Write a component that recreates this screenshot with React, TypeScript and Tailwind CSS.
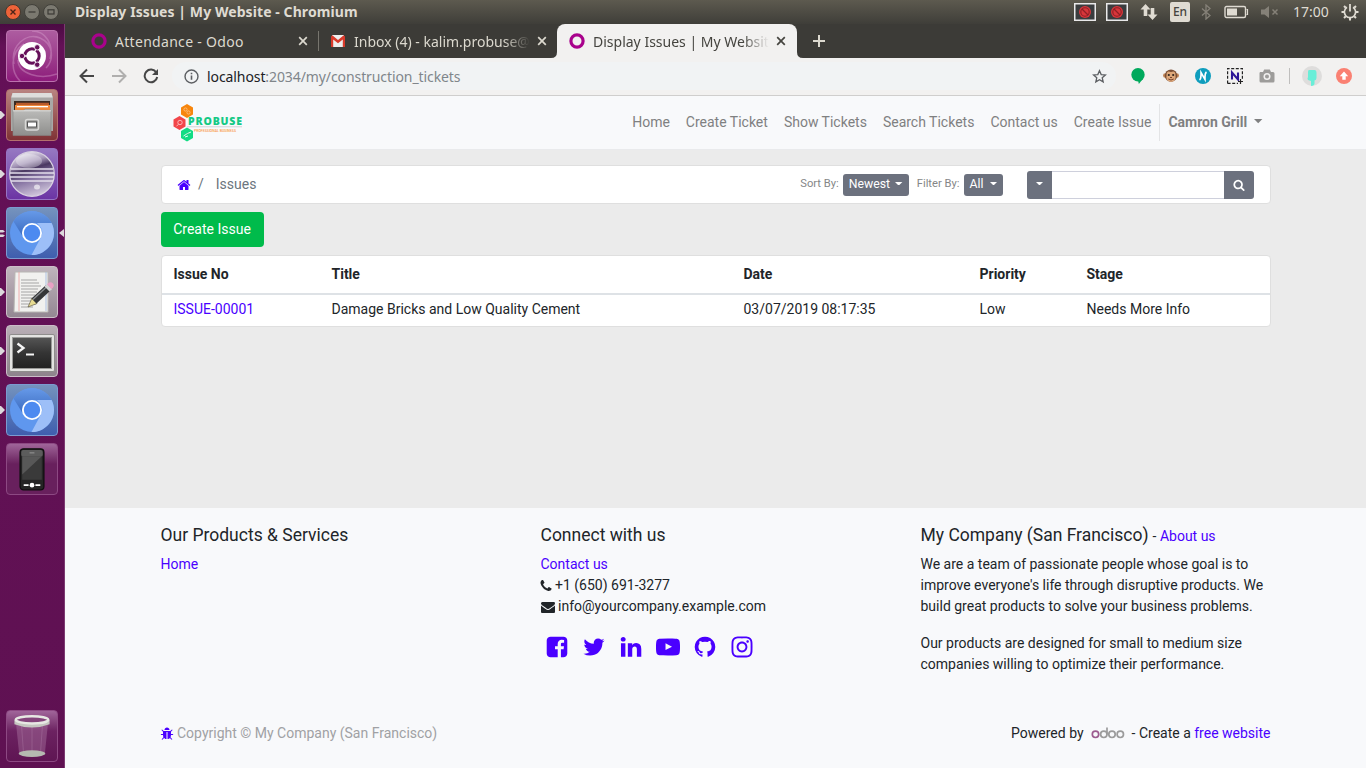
import React from "react";
import { FaInstagram } from "react-icons/fa";

const P = {
  home: "M1472 992v480q0 26-19 45t-45 19h-384v-384h-256v384h-384q-26 0-45-19t-19-45v-480q0-1 .5-3t.5-3l575-474 575 474q1 2 1 6zm223-69l-62 74q-8 9-21 11h-3q-13 0-21-7l-692-577-692 577q-12 8-24 7-13-2-21-11l-62-74q-8-10-7-23.5t11-21.5l719-599q32-26 76-26t76 26l244 204v-195q0-14 9-23t23-9h192q14 0 23 9t9 23v408l219 182q10 8 11 21.5t-7 23.5z",
  search: "M1216 832q0-185-131.5-316.5t-316.5-131.5-316.5 131.5-131.5 316.5 131.5 316.5 316.5 131.5 316.5-131.5 131.5-316.5zm512 832q0 52-38 90t-90 38q-54 0-90-38l-343-342q-179 124-399 124-143 0-273.5-55.5t-225-150-150-225-55.5-273.5 55.5-273.5 150-225 225-150 273.5-55.5 273.5 55.5 225 150 150 225 55.5 273.5q0 220-124 399l343 343q37 37 37 90z",
  phone: "M1600 1240q0 27-10 70.5t-21 68.5q-21 50-122 106-94 51-186 51-27 0-53-3.5t-57.5-12.5-47-14.5-55.5-20.5-49-18q-98-35-175-83-127-79-264-216t-216-264q-48-77-83-175-3-9-18-49t-20.5-55.5-14.5-47-12.5-57.5-3.5-53q0-92 51-186 56-101 106-122 25-11 68.5-21t70.5-10q14 0 21 3 18 6 53 76 11 19 30 54t35 63.5 31 53.5q3 4 17.5 25t21.5 35.5 7 28.5q0 20-28.5 50t-62 55-62 53-28.5 46q0 9 5 22.5t8.5 20.5 14 24 11.5 19q76 137 174 235t235 174q2 1 19 11.5t24 14 20.5 8.5 22.5 5q18 0 46-28.5t53-62 55-62 50-28.5q14 0 28.5 7t35.5 21.5 25 17.5q25 15 53.5 31t63.5 35 54 30q70 35 76 53 3 7 3 21z",
  mail: "M1792 710v794q0 66-47 113t-113 47h-1472q-66 0-113-47t-47-113v-794q44 49 101 87 362 246 497 345 57 42 92.5 65.5t94.5 48 110 24.5h2q51 0 110-24.5t94.5-48 92.5-65.5q170-123 498-345 57-39 100-87zm0-294q0 79-49 151t-122 123q-376 261-468 325-10 7-42.5 31t-54 38.5-52 32.5-57.5 27-50 9h-2q-23 0-50-9t-57.5-27-52-32.5-54-38.5-42.5-31q-91-64-262-182.5t-205-142.5q-62-42-117-115.5t-55-136.5q0-78 41.5-130t118.5-52h1472q65 0 112.5 47t47.5 113z",
  bug: "M1696 960q0 26-19 45t-45 19h-224q0 171-67 290l208 209q19 19 19 45t-19 45q-18 19-45 19t-45-19l-198-197q-5 5-15 13t-42 28.5-65 36.5-82 29-97 13v-896h-128v896q-51 0-101.5-13.5t-87-33-66-39-43.5-32.5l-15-14-183 207q-20 21-48 21-24 0-43-16-19-18-20.5-44.5t15.5-46.5l202-227q-58-114-58-274h-224q-26 0-45-19t-19-45 19-45 45-19h224v-294l-173-173q-19-19-19-45t19-45 45-19 45 19l173 173h844l173-173q19-19 45-19t45 19 19 45-19 45l-173 173v294h224q26 0 45 19t19 45zm-480-576h-640q0-133 93.5-226.5t226.5-93.5 226.5 93.5 93.5 226.5z",
  twitter: "M1684 408q-67 98-162 167 1 14 1 42 0 130-38 259.5t-115.5 248.5-184.5 210.5-258 146-323 54.5q-271 0-496-145 35 4 78 4 225 0 401-138-105-2-188-64.5t-114-159.5q33 5 61 5 43 0 85-11-112-23-185.5-111.5t-73.5-205.5v-4q68 38 146 41-66-44-105-115t-39-154q0-88 44-163 121 149 294.5 238.5t371.5 99.5q-8-38-8-74 0-134 94.5-228.5t228.5-94.5q140 0 236 102 109-21 205-78-37 115-142 178 93-10 186-50z",
  linkedin: "M477 625v991h-330v-991h330zm21-306q1 73-50.5 122t-135.5 49h-2q-82 0-132-49t-50-122q0-74 51.5-122.5t134.5-48.5 133 48.5 51 122.5zm1166 729v568h-329v-530q0-105-40.5-164.5t-126.5-59.5q-63 0-105.5 34.5t-63.5 85.5q-11 30-11 81v553h-329q2-399 2-647t-1-296l-1-48h329v144h-2q20-32 41-56t56.5-52 87-43.5 114.5-15.5q171 0 275 113.5t104 332.5z",
  github: "M896 128q209 0 385.5 103t279.5 279.5 103 385.5q0 251-146.5 451.5t-378.5 277.5q-27 5-40-7t-13-30q0-3 .5-76.5t.5-134.5q0-97-52-142 57-6 102.5-18t94-39 81-66.5 53-105 20.5-150.5q0-119-79-206 37-91-8-204-28-9-81 11t-92 44l-38 24q-93-26-192-26t-192 26q-16-11-42.5-27t-83.5-38.5-85-13.5q-45 113-8 204-79 87-79 206 0 85 20.5 150t52.5 105 80.5 67 94 39 102.5 18q-39 36-49 103-21 10-45 15t-57 5-65.5-21.5-55.5-62.5q-19-32-48.5-52t-49.5-24l-20-3q-21 0-29 4.5t-5 11.5 9 14 13 12l7 5q22 10 43.5 38t31.5 51l10 23q13 38 44 61.5t67 30 69.5 7 55.5-3.5l23-4q0 38 .5 88.5t.5 54.5q0 18-13 30t-40 7q-232-77-378.5-277.5t-146.5-451.5q0-209 103-385.5t279.5-279.5 385.5-103z",
  facebook: "M1376 128q119 0 203.5 84.5t84.5 203.5v960q0 119-84.5 203.5t-203.5 84.5h-188v-595h199l30-232h-229v-148q0-56 23.5-84t91.5-28l122-1v-207q-63-9-178-9-136 0-217.5 80t-81.5 226v171h-200v232h200v595h-532q-119 0-203.5-84.5t-84.5-203.5v-960q0-119 84.5-203.5t203.5-84.5h960z",
  youtube: "M711 1128l484-250-484-253v503zm185-862q168 0 324.5 4.5t229.5 9.5l73 4q1 0 17 1.5t23 3 23.5 4.5 28.5 8 28 13 31 19.5 29 26.5q6 6 15.5 18.5t29 58.5 26.5 101q8 64 12.5 136.5t5.5 113.5v176q1 145-18 290-7 55-25 99.5t-32 61.5l-14 17q-14 15-29 26.5t-31 19-28 12.5-28.5 8-24 4.5-23 3-16.5 1.5q-251 19-627 19-207-2-359.5-6.5t-200.5-7.5l-49-4-36-4q-36-5-54.5-10t-51-21-56.5-41q-6-6-15.5-18.5t-29-58.5-26.5-101q-8-64-12.5-136.5t-5.5-113.5v-176q-1-145 18-290 7-55 25-99.5t32-61.5l14-17q14-15 29-26.5t31-19.5 28-13 28.5-8 23.5-4.5 23-3 17-1.5q251-18 627-18z",
};

function Icon({ d, className }: { d: string; className: string }) {
  return (
    <svg viewBox="0 0 1792 1792" fill="currentColor" className={`shrink-0 ${className}`}>
      <path d={d} />
    </svg>
  );
}

const Caret = ({ className = "h-1 w-2" }: { className?: string }) => (
  <svg viewBox="0 0 8 4" className={`shrink-0 ${className}`} fill="currentColor"><path d="M0 0h8L4 4z" /></svg>
);

/* ---------- desktop panel ---------- */

function BlockedIndicator() {
  return (
    <svg viewBox="0 0 22 18" className="h-[18px] w-[22px] shrink-0">
      <rect x=".75" y=".75" width="20.5" height="16.5" fill="#3a3d3f" stroke="#e9e9ea" strokeWidth="1.5" />
      <circle cx="11" cy="9" r="6" fill="#d8363b" />
      <circle cx="11" cy="9" r="4.2" fill="none" stroke="#8d1f24" strokeWidth="1.1" />
      <path d="M8 6l6 6" stroke="#8d1f24" strokeWidth="1.2" />
    </svg>
  );
}

function DesktopPanel() {
  return (
    <header className="flex h-6 shrink-0 items-center bg-linear-to-b from-[#5d5a4f] to-[#3f3e39] text-[#dfdbd2]">
      <div className="flex w-[75px] shrink-0 gap-[3px] pl-[5px]">
        <svg viewBox="0 0 16 16" className="size-4"><circle cx="8" cy="8" r="7.5" fill="#ee6339" stroke="#43392f" /><path d="M5.5 5.5l5 5m0-5l-5 5" stroke="#4b2418" strokeWidth="1.4" /></svg>
        <svg viewBox="0 0 16 16" className="size-4"><circle cx="8" cy="8" r="7.5" fill="#7b7970" stroke="#42413b" /><path d="M4.5 8h7" stroke="#3b3a35" strokeWidth="1.2" /></svg>
        <svg viewBox="0 0 16 16" className="size-4"><circle cx="8" cy="8" r="7.5" fill="#7b7970" stroke="#42413b" /><rect x="5" y="5.8" width="6" height="4.2" fill="none" stroke="#3b3a35" strokeWidth="1.2" /></svg>
      </div>
      <h1 className="w-[288px] text-[14px] leading-6 font-bold tracking-[0.08px] whitespace-nowrap">Display Issues | My Website - Chromium</h1>
      <div className="ml-auto flex items-center pr-[7px]">
        <BlockedIndicator />
        <div className="w-2.5" />
        <BlockedIndicator />
        <svg viewBox="0 0 18 18" className="ml-3 h-[18px] w-[18px]" fill="#dfdbd2"><path d="M5.500 1L0.500 6.500h3.200V13h3.600V6.500h3.200zM12.500 17l5-5.500h-3.200V5h-3.600v6.500H7.500z" /></svg>
        <span className="ml-3 flex h-5 w-5 items-center justify-center rounded-[2px] bg-[#dfdbd2] text-[12px] font-medium text-[#45443e]">En</span>
        <svg viewBox="0 0 10 16" className="ml-[11px] h-4 w-2.5" fill="none" stroke="#858178" strokeWidth="1.3"><path d="M1 4.5l8 7L5 15V1l4 3.5-8 7" /></svg>
        <svg viewBox="0 0 25 14" className="ml-[13px] h-3.5 w-[25px]"><rect x="1" y="1.5" width="20.5" height="11" rx="1.5" fill="none" stroke="#dfdbd2" strokeWidth="1.4" /><rect x="3" y="3.5" width="10" height="7" fill="#dfdbd2" /><path d="M22.5 4.5h1v5h-1" stroke="#dfdbd2" fill="none" strokeWidth="1.2" /></svg>
        <svg viewBox="0 0 18 14" className="ml-3 h-3.5 w-[18px]" fill="#858178"><path d="M0 4.5h3.5L8 1v12L3.5 9.500H0z" /><path d="M11.5 4.500l5 5m0-5l-5 5" stroke="#858178" strokeWidth="1.5" /></svg>
        <span className="ml-3.5 w-[37px] text-[14px] leading-6 whitespace-nowrap">17:00</span>
        <svg viewBox="0 0 18 18" className="ml-[11px] size-[18px]" fill="none" stroke="#dfdbd2">
          <path d="M6 4.300a5.600 5.600 0 1 0 6 0" strokeWidth="1.600" />
          <path d="M9 1v7.500" strokeWidth="1.800" />
          <path d="M.5 9h2.500M15 9h2.500M3 15l1.800-1.800M15 15l-1.800-1.800M9 17.500v-2.500M3 3l1.800 1.800M15 3l-1.800 1.800" strokeWidth="2" />
        </svg>
      </div>
    </header>
  );
}

/* ---------- launcher ---------- */

const Gloss = "relative flex size-[52px] shrink-0 items-center justify-center rounded-[4px] border ";

function Running({ double = false }: { double?: boolean }) {
  return double ? (
    <svg viewBox="0 0 5 9" className="absolute top-[21px] -left-[7px] h-[9px] w-[5px]" fill="#dcd9dc"><path d="M0 1h3l2 1.500-2 1H0zM0 5.500h3l2 1-2 1.500H0z" /></svg>
  ) : (
    <svg viewBox="0 0 5 8" className="absolute top-[21px] -left-[7px] h-2 w-[5px]" fill="#dcd9dc"><path d="M0 0h1l4 4-4 4H0z" /></svg>
  );
}

function ChromiumGlyph({ id }: { id: string }) {
  return (
    <svg viewBox="0 0 44 44" className="size-[44px]">
      <defs>
        <linearGradient id={id} x1="0" y1="0" x2="0" y2="1"><stop offset="0" stopColor="#6699e8" /><stop offset="1" stopColor="#3b6bc0" /></linearGradient>
      </defs>
      <circle cx="22" cy="22" r="22" fill="#5f97ee" />
      <path d="M3.500 10.500A22 22 0 0 1 41.500 12H22a10 10 0 0 0-9.500 13z" fill={`url(#${id})`} />
      <path d="M41.600 12A22 22 0 0 1 21.500 44l9.300-17.200a10 10 0 0 0-1.500-12.300L27 12z" fill="#9dbff8" />
      <circle cx="22" cy="22" r="10" fill="#fff" />
      <circle cx="22" cy="22" r="8.200" fill="#4d8af0" />
    </svg>
  );
}

function Launcher() {
  return (
    <aside className="flex w-[65px] shrink-0 flex-col gap-[7px] border-r border-[#7c3a71] bg-linear-to-b from-[#4b0b43] via-[#641057] via-3% to-[#5f1152] pt-1.5 pb-1.5 pl-1.5">
      <div className={Gloss + "overflow-hidden border-[#bb72ae] bg-linear-to-b from-[#ad5ca0] to-[#8d1a7b]"}>
        <svg viewBox="0 0 52 52" className="size-[52px] shrink-0">
          <g fill="none" stroke="#d9a3d0" strokeOpacity=".4" strokeWidth="1.500">
            <path d="M8 34C4 16 20 2 34 8s14 22 6 30M15 52C4 42 4 22 18 14M51 44C34 50 12 44 12 30M26 1c14 0 22 14 18 28" />
          </g>
          <circle cx="26" cy="26" r="14" fill="#fff" />
          <circle cx="26" cy="26" r="7.200" fill="none" stroke="#66105a" strokeWidth="3" />
          <path d="M26 26L13 26M26 26l7-12M26 26l7 12" stroke="#fff" strokeWidth="1.300" />
          <g fill="#66105a" stroke="#fff" strokeWidth=".8"><circle cx="16" cy="26" r="2.700" /><circle cx="31.200" cy="17.300" r="2.700" /><circle cx="31.200" cy="34.700" r="2.700" /></g>
        </svg>
      </div>

      <div className={Gloss + "border-[#b3706d] bg-linear-to-b from-[#b98481] to-[#7f3235]"}>
        <Running />
        <svg viewBox="0 0 44 44" className="size-[44px]">
          <defs><linearGradient id="cabinet" x1="0" y1="0" x2="0" y2="1"><stop offset="0" stopColor="#bdbdbb" /><stop offset="1" stopColor="#8e8e8c" /></linearGradient></defs>
          <path d="M2.500 0h39l1.500 5v33H1V5z" fill="#a9a8a6" />
          <path d="M2.500 0h39l1.200 4.500H1.300z" fill="#dededc" />
          <rect x="4" y="8" width="36" height="10" fill="#3b2a22" />
          <path d="M6 9.800h33V13H6z" fill="#b85a2a" /><path d="M5 12h35v6H5z" fill="#f08a3c" /><path d="M7 13h31v1.300H7z" fill="#fff" />
          <path d="M3 17.300h10.500l1.500-1.300h14l1.500 1.300H41v25.200H3z" fill="url(#cabinet)" stroke="#858583" strokeWidth=".6" />
          <path d="M3 17.800h38" stroke="#e2e2e0" />
          <rect x="15.500" y="26.500" width="13" height="10.500" rx="2" fill="#9a9a98" stroke="#d9d9d7" strokeWidth="1.500" />
          <rect x="17.500" y="29" width="9" height="5" fill="#fff" stroke="#555" />
        </svg>
      </div>

      <div className={Gloss + "border-[#9674c4] bg-linear-to-b from-[#9678c2] to-[#6c34a4]"}>
        <Running />
        <svg viewBox="0 0 46 46" className="size-[46px]">
          <defs>
            <linearGradient id="globe" x1=".3" y1="0" x2=".6" y2="1"><stop offset="0" stopColor="#f0edf4" /><stop offset=".25" stopColor="#a596b8" /><stop offset=".4" stopColor="#4a3861" /><stop offset=".6" stopColor="#8370a0" /><stop offset="1" stopColor="#d3c9de" /></linearGradient>
          </defs>
          <circle cx="23" cy="23" r="22.300" fill="url(#globe)" stroke="#d9d2e0" strokeWidth="1.200" />
          <ellipse cx="20" cy="10" rx="13" ry="7" fill="#fff" opacity=".3" />
          <path d="M2 18h42M1 22h44M1 26h44M2 30h42" stroke="#e4deeb" strokeWidth="1.300" />
          <ellipse cx="28" cy="36" rx="3" ry="2.500" fill="#fff" opacity=".6" />
        </svg>
      </div>

      <div className={Gloss + "border-[#7b9bd0] bg-linear-to-b from-[#7593bd] to-[#3f5eae]"}>
        <Running double />
        <ChromiumGlyph id="chromiumA" />
        <svg viewBox="0 0 5 8" className="absolute top-[21px] -right-[7px] h-2 w-[5px]" fill="#dcd9dc"><path d="M5 0v8L0 4z" /></svg>
      </div>

      <div className={Gloss + "border-[#cdbfc9] bg-linear-to-b from-[#c0b5bd] to-[#948893]"}>
        <Running />
        <svg viewBox="0 0 44 44" className="size-[44px]">
          <path d="M5 2h33v40H4z" fill="#f1f1ef" stroke="#b8b6b3" />
          <path d="M9 2v39" stroke="#f0a0a0" strokeWidth=".8" /><path d="M36 2v39" stroke="#9fb6de" strokeWidth=".8" />
          <path d="M11 10h16M11 13h18M11 16h20M11 19h17M11 22h16M11 25h14M11 28h12M11 31h10M11 34h15M11 37h12" stroke="#a5a5a5" strokeWidth="1.100" />
          <path d="M18 37l4-9 5 5.500z" fill="#e8dc91" stroke="#504c35" strokeWidth=".6" />
          <path d="M21.500 28.500l14-13 5 5-14 13z" fill="#343638" />
          <path d="M23 29.500l13.500-12.500" stroke="#8a8d90" strokeWidth="1.300" />
          <path d="M34.500 16.500l2.500-2.300 5 5L39.500 21.500z" fill="#d4d4d4" /><path d="M37 14.200l2-1.700q2.500-1 4 1t0 4l-1.500 1.700z" fill="#e9a0c4" />
        </svg>
      </div>

      <div className={Gloss + "border-[#cbbdc8] bg-linear-to-b from-[#b9afb6] to-[#8e838c]"}>
        <Running />
        <svg viewBox="0 0 46 38" className="mt-1 h-[38px] w-[46px]">
          <defs><linearGradient id="term" x1="0" y1="0" x2="0" y2="1"><stop offset="0" stopColor="#555" /><stop offset=".5" stopColor="#343434" /><stop offset="1" stopColor="#222" /></linearGradient></defs>
          <rect x=".5" y=".5" width="45" height="37" rx="1.500" fill="#e3e3e1" stroke="#8f8d8c" />
          <rect x="3.500" y="3.500" width="39" height="31" fill="url(#term)" stroke="#9a9a98" />
          <path d="M8.500 9.500l6 4.500-6 4.500" fill="none" stroke="#f5f5f5" strokeWidth="2.300" /><path d="M17 20.500h8" stroke="#f5f5f5" strokeWidth="2" />
        </svg>
      </div>

      <div className={Gloss + "border-[#7b9bd0] bg-linear-to-b from-[#7593bd] to-[#3f5eae]"}>
        <Running />
        <ChromiumGlyph id="chromiumB" />
      </div>

      <div className={Gloss + "border-[#8d4983] bg-linear-to-b from-[#a0659a] via-[#68205d] via-40% to-[#68205d]"}>
        <svg viewBox="0 0 26 44" className="h-[43px] w-[26px]">
          <rect x=".8" y=".8" width="24.400" height="42" rx="3.500" fill="#242424" stroke="#0f0f0f" strokeWidth="1.300" />
          <rect x="2" y="2" width="22" height="7" rx="2" fill="#5c5c5c" />
          <rect x="3" y="8.500" width="20" height="24" fill="#3a3a3a" /><path d="M3 8.500h20L3 27z" fill="#585858" />
          <path d="M10.500 5h5" stroke="#999" /><path d="M4.500 38h5M16.500 38h5" stroke="#fff" strokeWidth="1.600" /><circle cx="13" cy="38" r="2.400" fill="#fff" />
        </svg>
      </div>

      <div className={Gloss + "mt-auto border-[#8d4983] bg-linear-to-b from-[#a0659a] via-[#6c2261] via-40% to-[#5f1553]"}>
        <svg viewBox="0 0 40 46" className="h-[46px] w-[38px]">
          <path d="M3 8h34l-3.500 34q-13.500 5-27 0z" fill="#b98db3" fillOpacity=".35" />
          <path d="M9 12l2 28M20 12v29M31 12l-2 28" stroke="#c59fc0" strokeWidth="1" opacity=".25" />
          <ellipse cx="20" cy="41.500" rx="14" ry="3.500" fill="#b5b9b1" />
          <path d="M1.500 6v4.500q18.500 7 37 0V6z" fill="#c5c6c0" />
          <ellipse cx="20" cy="6" rx="17" ry="3.800" fill="#84447b" stroke="#e7e8e3" strokeWidth="2.600" />
        </svg>
      </div>
    </aside>
  );
}

/* ---------- browser ---------- */

const OdooRing = () => (
  <svg viewBox="0 0 16 16" className="size-4 shrink-0"><circle cx="8" cy="8" r="6.100" fill="none" stroke="#a9028c" strokeWidth="3.200" /></svg>
);

const CloseX = () => (
  <svg viewBox="0 0 10 10" className="size-2.5 shrink-0"><path d="M1.200 1.200l7.600 7.600m0-7.600l-7.600 7.600" stroke="currentColor" strokeWidth="1.700" /></svg>
);

function TabStrip() {
  return (
    <div className="flex h-[34px] shrink-0 items-stretch bg-[#3c3b37] text-[#dcd9cf]">
      <div className="flex w-[253px] items-center border-0 pr-2.5 pl-[26px]">
        <OdooRing />
        <span className="ml-2 text-[14px] tracking-[0.3px] whitespace-nowrap">Attendance - Odoo</span>
        <span className="ml-auto"><CloseX /></span>
      </div>
      <div className="my-[7px] w-px bg-[#77756e]" />
      <div className="flex w-[238px] items-center pr-[10px] pl-3">
        <svg viewBox="0 0 14 12" className="h-3 w-3.5 shrink-0"><path d="M1 0h12v12H1z" fill="#eee" /><path d="M0 1.500V12h2.200V4.500L7 8.300l4.800-3.800V12H14V1.500L12.700.2 7 4.900 1.300.2z" fill="#d93a2b" /></svg>
        <span className="ml-[9px] mask-r-from-85% text-[14px] whitespace-nowrap">Inbox (4) - kalim.probuse@</span>
        <span className="ml-auto"><CloseX /></span>
      </div>
      <div className="relative flex w-[240px] items-center rounded-t-[8px] bg-[#f2f1f0] pr-[11px] pl-3 text-[#45443f]">
        <svg viewBox="0 0 6 6" className="absolute bottom-0 -left-1.5 size-1.5" fill="#f2f1f0"><path d="M6 0v6H0q6 0 6-6z" /></svg>
        <svg viewBox="0 0 6 6" className="absolute -right-1.5 bottom-0 size-1.5" fill="#f2f1f0"><path d="M0 0v6h6Q0 6 0 0z" /></svg>
        <OdooRing />
        <span className="ml-2 mask-r-from-85% text-[14px] whitespace-nowrap">Display Issues | My Websit</span>
        <span className="ml-auto"><CloseX /></span>
      </div>
      <svg viewBox="0 0 12 12" className="ml-4 size-3 self-center"><path d="M6 0v12M0 6h12" stroke="currentColor" strokeWidth="2" /></svg>
    </div>
  );
}

function Toolbar() {
  return (
    <div className="flex h-[38px] shrink-0 items-center border-b border-[#cfcecd] bg-[#f2f1f0] pr-3.5 pb-px pl-[14px]">
      <svg viewBox="0 0 16 16" className="size-4 shrink-0" fill="none" stroke="#464646" strokeWidth="2"><path d="M15 8H2M8 1.500L1.500 8 8 14.500" /></svg>
      <svg viewBox="0 0 16 16" className="ml-4 size-4 shrink-0" fill="none" stroke="#b0afae" strokeWidth="2"><path d="M1 8h13M8 1.500L14.500 8 8 14.500" /></svg>
      <svg viewBox="0 0 16 16" className="ml-4 size-4 shrink-0" fill="none" stroke="#464646" strokeWidth="2"><path d="M13.300 4.500A6.300 6.300 0 1 0 14.200 9" /><path d="M15 1v6H9z" fill="#464646" stroke="none" /></svg>
      <div className="ml-[13px] flex h-7 w-[944px] items-center rounded-full bg-[#f1f3f4] pr-[9px] pl-3">
        <svg viewBox="0 0 16 16" className="size-[15px] shrink-0" fill="none" stroke="#5c5f63" strokeWidth="1.500"><circle cx="8" cy="8" r="6.900" /><path d="M8 7v4.500M8 4v1.700" strokeWidth="1.700" /></svg>
        <span className="ml-[8px] text-[14px] tracking-[-0.09px] whitespace-nowrap text-[#80868b]"><span className="text-[#202124]">localhost</span>:2034/my/construction_tickets</span>
        <svg viewBox="0 0 16 16" className="ml-auto size-[15px]" fill="none" stroke="#5c5f63" strokeWidth="1.400"><path d="M8 1.800l1.800 4.100 4.500.4-3.400 3 1 4.400L8 11.400l-3.900 2.300 1-4.400-3.400-3 4.500-.4z" /></svg>
      </div>
      <div className="ml-auto flex items-center">
        <svg viewBox="0 0 14 16" className="h-4 w-3.5"><circle cx="7" cy="6.800" r="6.700" fill="#00a95c" /><path d="M7 12l.8 4 4-5z" fill="#00a95c" /></svg>
        <svg viewBox="0 0 16 16" className="ml-[18px] size-4">
          <circle cx="2.300" cy="7.500" r="2.300" fill="#bd8153" /><circle cx="13.700" cy="7.500" r="2.300" fill="#bd8153" /><circle cx="8" cy="7.700" r="6.200" fill="#7b4f35" />
          <path d="M8 4q4.500-2 4.500 3 1 6-4.500 7-5.500-1-4.500-7Q3.500 2 8 4z" fill="#dda779" /><circle cx="5.800" cy="7" r="1.100" fill="#2e211b" /><circle cx="10.200" cy="7" r="1.100" fill="#2e211b" /><path d="M5.300 11q2.700 2 5.400 0" stroke="#74402c" fill="none" /><path d="M7 9.500h2" stroke="#74402c" />
        </svg>
        <svg viewBox="0 0 16 16" className="ml-4 size-4"><circle cx="8" cy="8" r="8" fill="#0f9dbd" /><path d="M4.500 12q1.500-1 1.500-5V4.500L10 11.500V9q0-4 1.500-5" fill="none" stroke="#fff" strokeWidth="1.600" /></svg>
        <svg viewBox="0 0 16 16" className="ml-4 size-4" fill="none"><path d="M.6 15.400V.6h14.800V11M.6 15.400H11" stroke="#222" strokeWidth="1.200" strokeDasharray="3 1.600" /><path d="M5 11.500v-7l6 7v-7" stroke="#2d1597" strokeWidth="2.100" /><path d="M13.500 11v5M11 13.500h5" stroke="#222" strokeWidth="1.200" /></svg>
        <svg viewBox="0 0 16 14" className="ml-4 h-3.5 w-4" fill="#9d9c9a"><path d="M1 3h3l1.200-2.500h5.600L12 3h2q1.500 0 1.500 1.500V12q0 1.500-1.500 1.500H2Q.5 13.500.5 12V4z" /><circle cx="8" cy="7.500" r="3.500" fill="#f2f1f0" /><circle cx="8" cy="7.500" r="2" /></svg>
        <div className="ml-3.5 h-4 w-px bg-[#bfbebd]" />
        <svg viewBox="0 0 20 20" className="ml-3 size-5"><circle cx="10" cy="10" r="10" fill="#dedddc" /><path d="M7 4h5.500q2 0 2 3v5q0 2-2 2.500v3q0 2-3.500 2.500V15l-3-1q-1-1 0-3V6q0-2 1-2z" fill="#69eed8" /></svg>
        <svg viewBox="0 0 16 16" className="ml-3.5 size-4"><circle cx="8" cy="8" r="8" fill="#fa8072" /><path d="M8 3.500L3.800 8.200h2.500v3.500h3.400V8.200h2.500z" fill="#fff" /></svg>
      </div>
    </div>
  );
}

/* ---------- web page ---------- */

function ProbuseLogo() {
  return (
    <svg viewBox="0 0 72 38" className="h-[38px] w-[72px]">
      <path d="M14 0l6 3.500v7L14 14l-6-3.500v-7z" fill="#f7860d" />
      <path d="M6.500 12l6 3.500v7l-6 3.500-6-3.500v-7z" fill="#f2464a" />
      <path d="M14 23.500l6 3.500v7l-6 3.500L8 34v-7z" fill="#12dc84" />
      <circle cx="12.500" cy="5.500" r="1.600" fill="none" stroke="#fcc48a" strokeWidth=".8" /><circle cx="15.500" cy="8.500" r="1.600" fill="none" stroke="#fcc48a" strokeWidth=".8" />
      <circle cx="7" cy="18.500" r="2.200" fill="none" stroke="#fbc0c1" strokeWidth=".9" /><path d="M5.500 20.500L3.500 22" stroke="#fbc0c1" strokeWidth=".9" />
      <path d="M10.500 32l4-2.500L18 28M12 33l3-1" stroke="#e2fff2" strokeWidth="1" />
      <path d="M14 22.800h55" stroke="#cfd3d5" strokeWidth="1" />
      <text x="15" y="21.300" fontFamily="Open Sans, sans-serif" fontWeight="800" fontSize="10.500" textLength="54" lengthAdjust="spacing" fill="#14c985">PROBUSE</text>
      <text x="21" y="27.500" fontFamily="Roboto, sans-serif" fontSize="4" fontWeight="500" textLength="42" lengthAdjust="spacingAndGlyphs" fill="#f99a45">PROFESSIONAL BUSINESS</text>
    </svg>
  );
}

function SiteNav() {
  const links = ["Home", "Create Ticket", "Show Tickets", "Search Tickets", "Contact us", "Create Issue"];
  return (
    <nav className="h-[54px] shrink-0 border-b border-[#e9eaec] bg-[#f8f9fb]">
      <div className="mx-auto flex h-full w-[1140px] items-center px-[15px] text-[14px] text-[#7f8081]">
        <div className="ml-3"><ProbuseLogo /></div>
        <div className="ml-auto flex items-center">
          {links.map((l) => <a key={l} className="px-2 whitespace-nowrap">{l}</a>)}
          <div className="flex h-[37px] items-center border-l border-[#e3e4e6] px-2 font-bold whitespace-nowrap">Camron Grill<Caret className="-mt-0.5 ml-[7px] h-[4.2px] w-[8.4px]" /></div>
        </div>
      </div>
    </nav>
  );
}

function IssuesBar() {
  return (
    <div className="flex h-[39px] items-center rounded border border-[#dfdfdf] bg-white pr-4 pl-[15px] text-[14px]">
      <Icon d={P.home} className="size-[14px] text-[#4a00ff]" />
      <span className="ml-[7.5px] text-[#6c757d]">/</span>
      <span className="ml-3 text-[#6c757d]">Issues</span>
      <div className="ml-auto flex items-center">
        <span className="text-[11.200px] text-[#858687]">Sort By:</span>
        <button className="ml-1 flex h-[22px] w-[66px] items-center rounded-[3px] bg-[#6c717e] px-1.5 text-[12.25px] text-white">Newest<Caret className="-mt-0.5 ml-auto h-[3.700px] w-[7.400px]" /></button>
        <span className="ml-2 text-[11.200px] text-[#858687]">Filter By:</span>
        <button className="ml-1 flex h-[22px] w-[39px] items-center rounded-[3px] bg-[#6c717e] px-1.5 text-[12.25px] text-white">All<Caret className="-mt-0.5 ml-auto h-[3.5px] w-[7px]" /></button>
        <div className="ml-6 flex h-7 w-[227px]">
          <button className="flex w-[25px] items-center justify-center rounded-l-[3px] bg-[#6c717e] text-white"><Caret className="-mt-0.5 h-[3.5px] w-[7px]" /></button>
          <input className="min-w-0 flex-1 border-y border-[#ced0dc] bg-white outline-none" />
          <button className="flex w-[30px] items-center justify-center rounded-r-[3px] bg-[#6c717e] text-white"><Icon d={P.search} className="size-3" /></button>
        </div>
      </div>
    </div>
  );
}

function IssuesTable() {
  const row = "grid grid-cols-[158px_412px_236px_107px_1fr] items-center pl-3";
  return (
    <div className="mt-2 h-[72px] rounded border border-[#dfdfdf] bg-white text-[14px] text-[#212529]">
      <div className={row + " h-[39px] border-b-2 border-[#dee2e6] font-bold"}>
        <span>Issue No</span><span>Title</span><span>Date</span><span>Priority</span><span>Stage</span>
      </div>
      <div className={row + " h-[29px]"}>
        <a className="text-[#4a00ff]">ISSUE-00001</a><span>Damage Bricks and Low Quality Cement</span><span>03/07/2019 08:17:35</span><span>Low</span><span>Needs More Info</span>
      </div>
    </div>
  );
}

function OdooWordmark() {
  return (
    <svg viewBox="0 0 34 12" className="mx-[7px] -mt-0.5 inline-block h-3 w-[34px]" fill="none" strokeWidth="1.700">
      <circle cx="4.500" cy="7.300" r="3.200" stroke="#9c5b8f" />
      <g stroke="#9b9b9b"><circle cx="12.800" cy="7.300" r="3.200" /><path d="M16 .5v7" /><circle cx="21" cy="7.300" r="3.200" /><circle cx="29.300" cy="7.300" r="3.200" /></g>
    </svg>
  );
}

function SiteFooter() {
  return (
    <footer className="h-[260px] shrink-0 bg-[#f8f9fb] text-[14px] leading-[21px] text-[#212529]">
      <div className="mx-auto flex h-full w-[1140px] flex-col">
        <div className="grid h-[212px] grid-cols-3 pt-[17px]">
          <section className="px-[15px]">
            <h2 className="mb-[8px] text-[17.5px] leading-[21px]">Our Products &amp; Services</h2>
            <a className="text-[#4a00ff]">Home</a>
          </section>
          <section className="px-[15px]">
            <h2 className="mb-[8px] text-[17.5px] leading-[21px]">Connect with us</h2>
            <div className="text-[#4a00ff]">Contact us</div>
            <div className="flex items-center"><Icon d={P.phone} className="-ml-[1.500px] size-[14px]" /><span className="ml-[2px]">+1 (650) 691-3277</span></div>
            <div className="flex items-center"><Icon d={P.mail} className="size-[14px]" /><span className="ml-[3.500px]">info@yourcompany.example.com</span></div>
            <div className="mt-[18px] ml-1 flex items-center gap-[13px] text-[#4a00ff]">
              <Icon d={P.facebook} className="size-6" />
              <Icon d={P.twitter} className="size-6" />
              <Icon d={P.linkedin} className="size-6" />
              <Icon d={P.youtube} className="size-6" />
              <Icon d={P.github} className="size-6" />
              <FaInstagram className="size-6" />
            </div>
          </section>
          <section className="px-[15px]">
            <h2 className="mb-[7px] leading-[21px] whitespace-nowrap"><span className="text-[17.5px]">My Company (San Francisco)</span><span className="ml-[4px]">- <a className="text-[#4a00ff]">About us</a></span></h2>
            <p>We are a team of passionate people whose goal is to improve everyone's life through disruptive products. We build great products to solve your business problems.</p>
            <p className="mt-4">Our products are designed for small to medium size companies willing to optimize their performance.</p>
          </section>
        </div>
        <div className="flex items-center justify-between px-[15px] pt-[3px]">
          <span className="flex items-center text-[#a0a1a4]"><Icon d={P.bug} className="-ml-px size-[14px] text-[#4a00ff]" /><span className="ml-[3.500px]">Copyright © My Company (San Francisco)</span></span>
          <span className="whitespace-nowrap">Powered by<OdooWordmark />- Create a <a className="text-[#4a00ff]">free website</a></span>
        </div>
      </div>
    </footer>
  );
}

export default function App() {
  return (
    <div className="flex h-[768px] w-[1366px] flex-col overflow-hidden font-['Noto_Sans',sans-serif]">
      <DesktopPanel />
      <div className="flex min-h-0 flex-1">
        <Launcher />
        <div className="flex min-w-0 flex-1 flex-col">
          <TabStrip />
          <Toolbar />
          <div className="flex min-h-0 flex-1 flex-col bg-[#ebebeb] font-['Roboto',sans-serif]">
            <SiteNav />
            <main className="mx-auto min-h-0 w-[1140px] flex-1 px-[15px] pt-[15px]">
              <IssuesBar />
              <button className="mt-2 block h-[35px] w-[103px] rounded bg-[#00bb4b] text-[14px] text-white">Create Issue</button>
              <IssuesTable />
            </main>
            <SiteFooter />
          </div>
        </div>
      </div>
    </div>
  );
}
